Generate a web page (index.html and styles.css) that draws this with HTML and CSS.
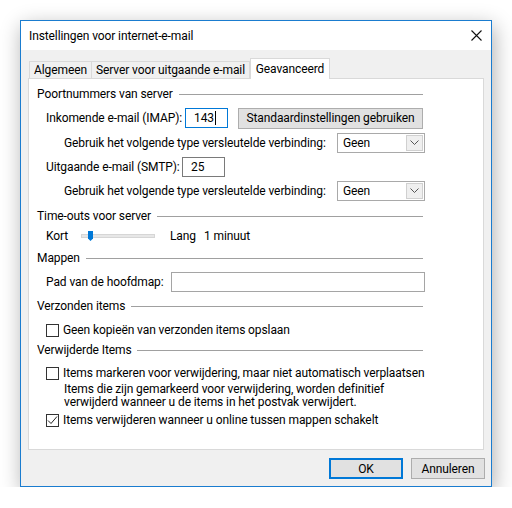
FILE: index.html
```html
<!DOCTYPE html>
<html lang="nl">
<head>
    <meta charset="UTF-8">
    <title>Instellingen voor internet-e-mail</title>
    <link rel="stylesheet" href="styles.css">
</head>
<body>
    <div class="window">
        <div class="titlebar">
            <span class="title">Instellingen voor internet-e-mail</span>
            <svg class="close" width="11" height="11" viewBox="0 0 11 11">
                <path d="M0.5 0.5 L10.5 10.5 M10.5 0.5 L0.5 10.5" stroke="#111" stroke-width="1.1" fill="none"/>
            </svg>
        </div>

        <div class="tabs">
            <div class="tab tab-general">Algemeen</div>
            <div class="tab tab-server">Server voor uitgaande e-mail</div>
            <div class="tab tab-advanced active">Geavanceerd</div>
        </div>

        <div class="panel">
            <div class="group-head"><span>Poortnummers van server</span><span class="rule"></span></div>

            <div class="row row-imap">
                <span class="lbl lbl-imap">Inkomende e-mail (IMAP):</span>
                <div class="field field-imap">143<span class="caret"></span></div>
                <button class="btn btn-defaults">Standaardinstellingen gebruiken</button>
            </div>
            <div class="row row-sub row-enc1">
                <span>Gebruik het volgende type versleutelde verbinding:</span>
                <div class="combo"><span>Geen</span><span class="combo-arrow"><svg width="9" height="6" viewBox="0 0 9 6"><path d="M0.5 0.5 L4.5 4.5 L8.5 0.5" stroke="#555" fill="none"/></svg></span></div>
            </div>
            <div class="row row-smtp">
                <span class="lbl lbl-smtp">Uitgaande e-mail (SMTP):</span>
                <div class="field field-smtp">25</div>
            </div>
            <div class="row row-sub row-enc2">
                <span>Gebruik het volgende type versleutelde verbinding:</span>
                <div class="combo"><span>Geen</span><span class="combo-arrow"><svg width="9" height="6" viewBox="0 0 9 6"><path d="M0.5 0.5 L4.5 4.5 L8.5 0.5" stroke="#555" fill="none"/></svg></span></div>
            </div>

            <div class="group-head head-timeout"><span>Time-outs voor server</span><span class="rule"></span></div>
            <div class="row row-slider">
                <span class="lbl-short">Kort</span>
                <div class="track">
                    <svg class="thumb" width="5" height="10" viewBox="0 0 5 10"><path d="M0 0 H5 V7.5 L2.5 10 L0 7.5 Z" fill="#0078d7"/></svg>
                </div>
                <span class="lbl-long">Lang</span>
                <span>1 minuut</span>
            </div>

            <div class="group-head head-folders"><span>Mappen</span><span class="rule"></span></div>
            <div class="row row-path">
                <span class="lbl lbl-path">Pad van de hoofdmap:</span>
                <div class="field field-path"></div>
            </div>

            <div class="group-head head-sent"><span>Verzonden items</span><span class="rule"></span></div>
            <div class="row row-check check-sent">
                <span class="box"></span>
                <span>Geen kopieën van verzonden items opslaan</span>
            </div>

            <div class="group-head head-deleted"><span>Verwijderde Items</span><span class="rule"></span></div>
            <div class="row row-check check-mark">
                <span class="box"></span>
                <span>Items markeren voor verwijdering, maar niet automatisch verplaatsen</span>
            </div>
            <p class="note">Items die zijn gemarkeerd voor verwijdering, worden definitief<br>verwijderd wanneer u de items in het postvak verwijdert.</p>
            <div class="row row-check check-purge">
                <span class="box checked"><svg width="11" height="11" viewBox="0 0 11 11"><path d="M1 5.5 L4 8.5 L10 1.5" stroke="#222" stroke-width="1" fill="none"/></svg></span>
                <span>Items verwijderen wanneer u online tussen mappen schakelt</span>
            </div>
        </div>

        <div class="footer">
            <button class="btn btn-ok">OK</button>
            <button class="btn btn-cancel">Annuleren</button>
        </div>
    </div>
</body>
</html>
```

FILE: styles.css
```css
body {
    margin: 0;
    background: #fff;
    font-family: Roboto, "Noto Sans", sans-serif;
    font-size: 12px;
    letter-spacing: -0.1px;
    color: #000;
}

.window {
    margin: 20px 0 0 20px;
    width: 470px;
    border: 1px solid #1a7ccf;
    background: #f0f0f0;
    box-shadow: 2px 6px 20px rgba(0, 0, 0, 0.32);
}

.titlebar {
    height: 29px;
    background: #fff;
    display: flex;
    align-items: center;
    justify-content: space-between;
    padding: 0 9px 0 8px;
}

.close {
    display: block;
}

/* tabs */
.tabs {
    display: flex;
    align-items: flex-end;
    height: 20px;
    margin-top: 8px;
    padding-left: 8px;
}

.tab {
    box-sizing: border-box;
    height: 17px;
    border: 1px solid #d9d9d9;
    border-bottom: none;
    background: #f0f0f0;
    display: flex;
    align-items: center;
    justify-content: center;
    white-space: nowrap;
}

.tab + .tab {
    border-left: none;
}

.tab-general {
    width: 63px;
}

.tab-server {
    width: 158px;
}

.tab.active {
    width: 80px;
    height: 21px;
    margin-bottom: -1px;
    border-left: 1px solid #d9d9d9;
    background: #fff;
    position: relative;
}

/* panel */
.panel {
    box-sizing: border-box;
    height: 372px;
    margin: 0 7px;
    padding: 7px 58px 0 8px;
    border: 1px solid #d9d9d9;
    background: #fff;
}

.group-head {
    display: flex;
    align-items: center;
    gap: 6px;
    height: 16px;
    white-space: nowrap;
}

.rule {
    flex: 1;
    height: 1px;
    margin-right: 2px;
    background: #a0a0a0;
}

.head-timeout { margin-top: 7px; }
.head-folders { margin-top: 6px; }
.head-sent { margin-top: 6px; }
.head-deleted { margin-top: 4px; }

.row {
    display: flex;
    align-items: center;
    height: 20px;
    padding-left: 9px;
    white-space: nowrap;
}

.row > * {
    flex-shrink: 0;
}

.row-sub {
    padding-left: 27px;
}

.row-imap { margin-top: 6px; }
.row-enc1 { margin-top: 5px; }
.row-smtp { margin-top: 4px; }
.row-enc2 { margin-top: 4px; }
.row-path { margin-top: 6px; }

.lbl-imap { width: 139px; }
.lbl-smtp { width: 136px; }
.lbl-path { width: 125px; }

.field {
    box-sizing: border-box;
    height: 20px;
    border: 1px solid #7a7a7a;
    background: #fff;
    display: flex;
    align-items: center;
    padding-left: 8px;
}

.field-imap {
    width: 43px;
    border-color: #0078d7;
}

.caret {
    width: 1px;
    height: 14px;
    margin-left: 1px;
    background: #000;
}

.field-smtp {
    width: 43px;
}

.row .field-path {
    flex: 1;
    border-color: #a5a5a5;
}

.btn {
    box-sizing: border-box;
    font: inherit;
    letter-spacing: inherit;
    color: #000;
    background: #e1e1e1;
    border: 1px solid #adadad;
    padding: 0;
}

.btn-defaults {
    width: 185px;
    height: 21px;
    margin-left: 10px;
}

.combo {
    box-sizing: border-box;
    width: 88px;
    height: 20px;
    margin-left: auto;
    border: 1px solid #a9a9a9;
    display: flex;
    align-items: center;
    justify-content: space-between;
    padding: 0 1px 0 5px;
}

.combo-arrow {
    box-sizing: border-box;
    width: 17px;
    height: 16px;
    border: 1px solid #d0d0d0;
    background: #efefef;
    display: flex;
    align-items: center;
    justify-content: center;
}

/* slider */
.row-slider {
    height: 16px;
    margin-top: 4px;
}

.lbl-short {
    width: 35px;
}

.track {
    box-sizing: border-box;
    width: 74px;
    height: 4px;
    border: 1px solid #d6d6d6;
    background: #e7e7e7;
    position: relative;
}

.thumb {
    position: absolute;
    left: 6px;
    top: -4px;
}

.lbl-long {
    width: 34px;
    margin-left: 15px;
}

/* checkboxes */
.row-check {
    height: 16px;
}

.check-sent { margin-top: 8px; }
.check-mark { margin-top: 7px; }
.check-purge { margin-top: 3px; }

.box {
    box-sizing: border-box;
    width: 13px;
    height: 13px;
    margin-right: 4px;
    border: 1px solid #333;
    background: #fff;
    display: flex;
    align-items: center;
    justify-content: center;
}

.note {
    margin: 2px 0 0;
    padding-left: 27px;
    line-height: 13px;
    white-space: nowrap;
}

/* footer */
.footer {
    display: flex;
    justify-content: flex-end;
    gap: 8px;
    margin-top: 8px;
    padding: 0 6px 7px 0;
}

.footer .btn {
    width: 74px;
    height: 21px;
}

.btn-ok {
    border: 2px solid #0078d7;
}
```
